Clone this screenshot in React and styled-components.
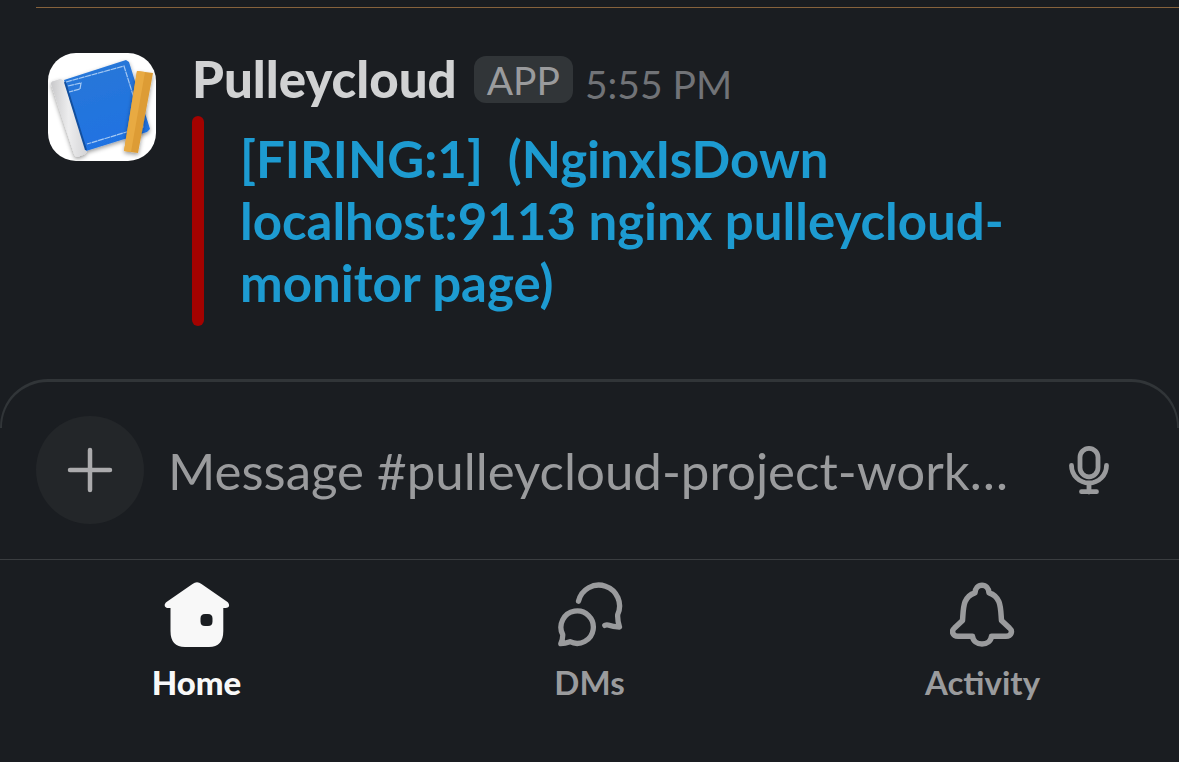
import styled, { createGlobalStyle } from "styled-components";

const GlobalStyle = createGlobalStyle`
  * {
    box-sizing: border-box;
  }
  body {
    margin: 0;
    background: #1a1d21;
    color: #d1d2d3;
    font-family: "Lato", sans-serif;
  }
`;

const Divider = styled.hr`
  margin: 7px 0 0 36px;
  border: 0;
  border-top: 1px solid #86623c;
`;

const Message = styled.article`
  display: flex;
  gap: 36px;
  padding: 45px 48px 53px;
`;

const Avatar = styled.svg`
  flex: none;
  width: 108px;
  height: 108px;
  border-radius: 28px;
`;

const MessageBody = styled.div`
  flex: 1;
  min-width: 0;
`;

const MessageHeader = styled.header`
  display: flex;
  align-items: flex-start;
  height: 63px;
  line-height: 52px;
`;

const Author = styled.span`
  font-size: 51px;
  font-weight: 900;
`;

const AppBadge = styled.span`
  height: 47px;
  margin: 3px 12px 0 17px;
  padding: 0 13px;
  border-radius: 12px;
  background: #313538;
  color: #9a9b9d;
  font-size: 39px;
  line-height: 48px;
`;

const Time = styled.time`
  padding-top: 5px;
  color: #717377;
  font-size: 39px;
`;

const Attachment = styled.div`
  display: flex;
  gap: 36px;
`;

const AttachmentBar = styled.div`
  flex: none;
  width: 12px;
  border-radius: 6px;
  background: #a30200;
`;

const AlertLink = styled.a`
  max-width: 800px;
  padding: 12px 0;
  color: #1d9bd1;
  font-size: 51px;
  font-weight: 700;
  line-height: 62px;
  text-decoration: none;
  white-space: pre-wrap;
`;

const ComposerEdge = styled.div`
  height: 49px;
  margin-bottom: -49px;
  border: 2px solid #313538;
  border-top-width: 3px;
  border-bottom: 0;
  border-radius: 48px 48px 0 0;
`;

const Composer = styled.form`
  display: flex;
  align-items: center;
  padding: 37px 60px 35px 36px;
`;

const AddButton = styled.button`
  display: flex;
  align-items: center;
  justify-content: center;
  flex: none;
  width: 108px;
  height: 108px;
  padding: 0;
  border: 0;
  border-radius: 50%;
  background: #232629;
  color: #ababad;
`;

const MessageInput = styled.input`
  flex: 1;
  min-width: 0;
  height: 72px;
  margin: 0 24px;
  padding: 0;
  border: 0;
  outline: 0;
  background: transparent;
  color: #d1d2d3;
  font: 400 51px "Lato", sans-serif;
  text-overflow: ellipsis;
  &::placeholder {
    color: #9a9b9d;
    opacity: 1;
  }
`;

const MicButton = styled.button`
  display: flex;
  flex: none;
  padding: 0;
  border: 0;
  background: transparent;
  color: #9a9b9d;
`;

const TabBar = styled.nav`
  display: grid;
  grid-template-columns: repeat(3, 1fr);
  padding-top: 21px;
  border-top: 1px solid #3a3d40;
`;

const Tab = styled.a`
  display: flex;
  flex-direction: column;
  align-items: center;
  gap: 15px;
  color: ${({ $active }) => ($active ? "#f8f8f8" : "#9a9b9d")};
  font-size: 33px;
  font-weight: ${({ $active }) => ($active ? 900 : 700)};
  line-height: 40px;
  text-decoration: none;
`;

const BookAvatar = () => (
  <Avatar viewBox="0 0 108 108" role="img" aria-label="Pulleycloud">
    <defs>
      <linearGradient id="pages" x1="0" x2="1" y1="0" y2="0">
        <stop offset="0" stopColor="#c9c9cb" />
        <stop offset="0.5" stopColor="#ededee" />
        <stop offset="1" stopColor="#d5d5d7" />
      </linearGradient>
      <linearGradient id="cover" x1="0" x2="0.3" y1="0" y2="1">
        <stop offset="0" stopColor="#2a78d6" />
        <stop offset="1" stopColor="#1f72e2" />
      </linearGradient>
      <filter id="shadow" x="-20%" y="-20%" width="140%" height="140%">
        <feDropShadow dx="0" dy="2" stdDeviation="2" floodOpacity="0.4" />
      </filter>
    </defs>
    <rect width="108" height="108" fill="#fff" />
    <g filter="url(#shadow)">
      <path d="M16 27 78 7 81 9 102 76 99 79 38 98z" fill="url(#cover)" />
      <path d="M3 31Q3 28 6 28L12 26Q15 26 16 29L38 97Q39 100 37 101L30 104Q27 104 26 101z" fill="url(#pages)" />
    </g>
    <path d="M17 29 38 97" stroke="#124f9e" strokeWidth="2" />
    <path d="M18 29 76 13 95 74 39 91M20 33 33 30 32 36 21 39" fill="none" stroke="#a5c9f3" strokeWidth="1.2" strokeDasharray="6 0.6" />
    <path d="M89 18 105 20 90 100 76 98z" fill="#dd9c35" filter="url(#shadow)" />
    <path d="M89 18 97 19 83 99 76 98z" fill="#e8aa42" />
  </Avatar>
);

const PlusIcon = () => (
  <svg width="48" height="48" viewBox="0 0 48 48" aria-hidden="true">
    <path d="M24 4v40M4 24h40" stroke="currentColor" strokeWidth="4.5" strokeLinecap="round" />
  </svg>
);

const MicIcon = () => (
  <svg width="60" height="60" viewBox="0 0 60 60" fill="none" stroke="currentColor" strokeWidth="4.8" strokeLinecap="round" aria-hidden="true">
    <rect x="21" y="8.3" width="18" height="28.5" rx="9" />
    <path d="M12.5 25.5a17.5 17.5 0 0 0 35 0M30 43v9M22.5 51.7h15" />
  </svg>
);

const HomeIcon = () => (
  <svg width="66" height="66" viewBox="0 0 66 66" aria-hidden="true">
    <path
      fill="currentColor"
      fillRule="evenodd"
      d="M28.5 3Q33 -.5 37.5 3L63.5 21C66.5 24 65 27 61.5 27H59.3V50Q59.3 66 45 66H21Q6.5 66 6.5 50V27H4.5C1 27-1 24 2.5 21zM41 33Q36.5 33 36.5 37.5V40.5Q36.5 45 41 45H44Q48.5 45 48.5 40.5V37.5Q48.5 33 44 33z"
    />
  </svg>
);

const DmsIcon = () => (
  <svg width="66" height="66" viewBox="0 0 66 66" fill="none" stroke="currentColor" strokeWidth="5.3" strokeLinecap="round" strokeLinejoin="round" aria-hidden="true">
    <path d="M21.5 20.2A20.8 20.8 0 1 1 60.7 33.5Q60.3 39 62.5 46Q56 45.8 51 44Q49.5 43.6 47.8 44.4" />
    <path d="M5.7 53.5A16.2 16.2 0 1 1 13 60.7Q8 62.5 3.8 62.6Q6 58 5.7 53.5z" />
  </svg>
);

const BellIcon = () => (
  <svg width="66" height="66" viewBox="0 0 66 66" fill="none" stroke="currentColor" strokeWidth="5.5" strokeLinecap="round" strokeLinejoin="round" aria-hidden="true">
    <path d="M22.5 55.2H8C2.5 55.2 1 50 4.5 47L12.5 39.5C13.5 28 12.5 15.5 25 11.8C25.3 7.5 28 4.2 32 4.2S38.7 7.5 39 11.8C51.5 15.5 50.5 28 51.5 39.5L59.5 47C63 50 61.5 55.2 56 55.2H41.5C41 60 37 63 32 63S23 60 22.5 55.2z" />
  </svg>
);

const App = () => {
  return (
    <>
      <GlobalStyle />
      <main>
        <Divider />
        <Message>
          <BookAvatar />
          <MessageBody>
            <MessageHeader>
              <Author>Pulleycloud</Author>
              <AppBadge>APP</AppBadge>
              <Time dateTime="17:55">5:55 PM</Time>
            </MessageHeader>
            <Attachment>
              <AttachmentBar />
              <AlertLink href="#alert">
                {"[FIRING:1]  (NginxIsDown localhost:9113 nginx pulleycloud-monitor page)"}
              </AlertLink>
            </Attachment>
          </MessageBody>
        </Message>
      </main>
      <ComposerEdge />
      <Composer>
        <AddButton type="button" aria-label="Add attachment">
          <PlusIcon />
        </AddButton>
        <MessageInput
          type="text"
          aria-label="Message"
          placeholder="Message #pulleycloud-project-work…"
        />
        <MicButton type="button" aria-label="Record audio">
          <MicIcon />
        </MicButton>
      </Composer>
      <TabBar>
        <Tab href="#home" $active aria-current="page">
          <HomeIcon />
          Home
        </Tab>
        <Tab href="#dms">
          <DmsIcon />
          DMs
        </Tab>
        <Tab href="#activity">
          <BellIcon />
          Activity
        </Tab>
      </TabBar>
    </>
  );
};

export default App;
